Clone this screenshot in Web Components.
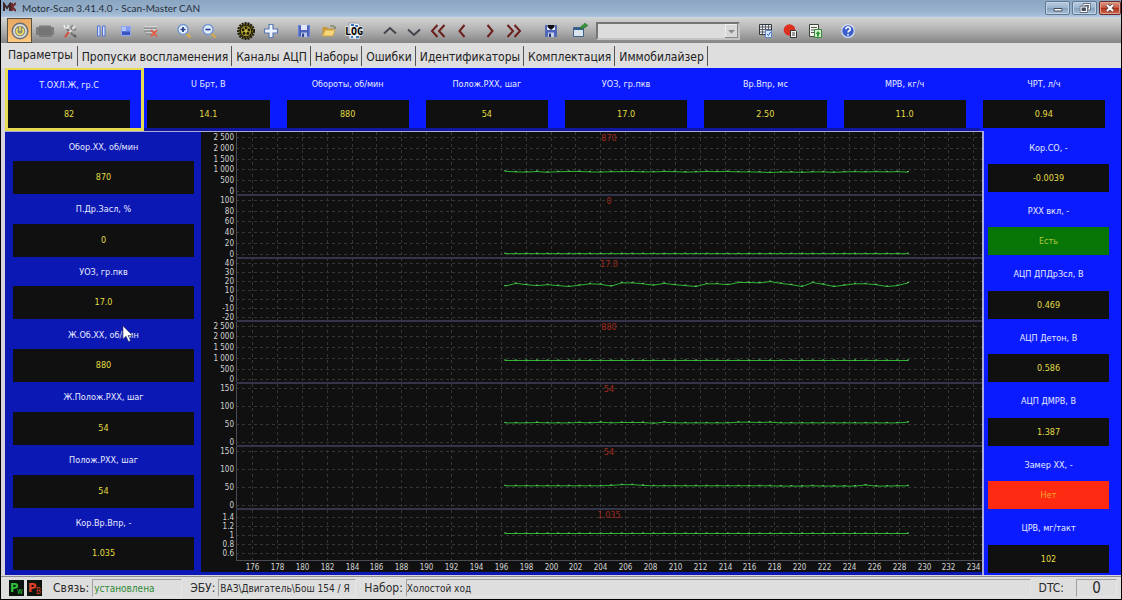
<!DOCTYPE html>
<html lang="ru">
<head>
<meta charset="utf-8">
<meta name="viewport" content="width=device-width, initial-scale=1">
<title>Motor-Scan 3.41.4.0 - Scan-Master CAN</title>
<style>
    html, body {
        height: 100%;
    }

    body {
        margin: 0;
        background: #000;
        font-family: "DejaVu Sans Condensed", "DejaVu Sans", sans-serif;
    }
</style>
</head>
<body>
<scan-app></scan-app>

<script>
const ICONS = {
    power: `<circle cx="9" cy="9" r="8.500" fill="#6c6d70"/><circle cx="9" cy="9" r="7" fill="#d9dcde"/><circle cx="9" cy="9" r="5.200" fill="#8b8c7c"/><path d="M6.600 6.600a3.400 3.400 0 1 0 4.800 0M9 4.600v4.200" fill="none" stroke="#f3e45a" stroke-width="1.500"/>`,
    engine: `<path d="M1 5h2V3.500h12V5h3v8h-2v2H3v-2H0V6z" fill="#7c7c7c"/><path d="M3 6h12v7H3z" fill="#747474"/>`,
    tools: `<path d="M4 5l9 9" stroke="#777" stroke-width="2"/><path d="M3 3l1 3 3 0 0-3" fill="none" stroke="#eee" stroke-width="1.500"/><path d="M14 4L5 14" stroke="#dedede" stroke-width="2"/><path d="M8 10l-4 5" stroke="#c8503c" stroke-width="2.200"/><path d="M12 3.500a2.500 2.500 0 1 0 3 3" fill="none" stroke="#858585" stroke-width="1.300"/><path d="M13 13l2 2" stroke="#555" stroke-width="2"/>`,
    pause: `<path d="M5.500 4h2.500v10H5.500zM10.500 4H13v10h-2.500z" fill="#d5e2ff" stroke="#5271cf"/>`,
    stop: `<path d="M4.500 4.500h9v9h-9z" fill="#5574dd" stroke="#8fa6f0"/><path d="M5 5h4v4H5z" fill="#b4c4fa"/><path d="M9 5h4v4H9z" fill="#8098ee"/><path d="M5 10h8v3H5z" fill="#3b55c0"/>`,
    clear: `<path d="M2 5h13M2 8h12M4 11h7" stroke="#eee" stroke-width="1.200"/><path d="M2 6h13M2 9h10M4 12h6" stroke="#777"/><path d="M9 8l6 6.500M15 8l-6 6.500" stroke="#e8573b" stroke-width="1.800"/>`,
    zoomIn: `<path d="M11 11l4.500 4.500" stroke="#d5ab45" stroke-width="2.400"/><circle cx="8" cy="7.500" r="5" fill="#e4eefb" stroke="#7195cf" stroke-width="1.400"/><path d="M5.500 7.500h5M8 5v5" stroke="#223f8e" stroke-width="1.700"/>`,
    zoomOut: `<path d="M11 11l4.500 4.500" stroke="#d5ab45" stroke-width="2.400"/><circle cx="8" cy="7.500" r="5" fill="#e4eefb" stroke="#7195cf" stroke-width="1.400"/><path d="M5.500 7.500h5" stroke="#223f8e" stroke-width="1.700"/>`,
    gear: `<circle cx="9" cy="9" r="8" fill="none" stroke="#221f08" stroke-width="2" stroke-dasharray="2 1"/><circle cx="9" cy="9" r="7.500" fill="#1d1a08"/><circle cx="9" cy="9" r="5.200" fill="#a3942c"/><g fill="#1d1a08"><circle cx="9" cy="5.800" r="1.300"/><circle cx="11.900" cy="7.900" r="1.300"/><circle cx="10.900" cy="11.400" r="1.300"/><circle cx="7.100" cy="11.400" r="1.300"/><circle cx="6.100" cy="7.900" r="1.300"/></g><circle cx="9" cy="9" r="1.200" fill="#cfc058"/><circle cx="9" cy="9" r="6.500" fill="none" stroke="#857922" stroke-dasharray="1.500 1.500"/>`,
    plus: `<path d="M7 2.500h4V7h4.500v4H11v4.500H7V11H2.500V7H7z" fill="#eef4ff" stroke="#5a7bb4" stroke-width="1.200"/>`,
    save: `<path d="M3.500 3.500h11v11h-11z" fill="#4c62bb" stroke="#6a80d4"/><path d="M6 3h6v5H6z" fill="#dfe6fa"/><path d="M6 10.500h6V15H6z" fill="#b9c5e8"/><path d="M7 11.500h2V15H7z" fill="#33458f"/>`,
    saveAs: `<path d="M3.500 3.500h11v11h-11z" fill="#4c62bb" stroke="#5468b0"/><path d="M5 3h8v5H5z" fill="#e6ebfa"/><path d="M5.500 3h7v2L9 8 5.500 5z" fill="#0c0c18"/><path d="M6 10.500h6V15H6z" fill="#c8d1ec"/><path d="M7 11.500h2V15H7z" fill="#20306e"/>`,
    folder: `<path d="M2.500 5h4l1.500 1.500h5V14H2.500z" fill="#c69a3c"/><path d="M5 8h10l-2 6H2.500z" fill="#f7d77a" stroke="#c89b3b" stroke-width=".8"/><path d="M10 4c2-2 4-1 5 1l1-1v3h-3l1-1c-1-1.500-2-1.500-4-1z" fill="#8b8b6b"/>`,
    log: `<path d="M4 1h9l2 2v14H4z" fill="#edf3fa" stroke="#8a94a4" stroke-width=".8"/><path d="M6 2h3v2H6zM10 3h3v2h-3zM6 14h2v2H6zM11 14h3v2h-3z" fill="#3b75b5"/><text x="9" y="13" font-family="DejaVu Sans Mono" font-weight="bold" font-size="10" text-anchor="middle" stroke="#e6e6e6" stroke-width="1.500" paint-order="stroke">LOG</text>`,
    up: `<path d="M3 11.500L9 6l6 5.500" fill="none" stroke="#42454f" stroke-width="2"/>`,
    down: `<path d="M3 7.500L9 13l6-5.500" fill="none" stroke="#42454f" stroke-width="2"/>`,
    first: `<path d="M8.500 3L3 9l5.500 6M15.500 3L10 9l5.500 6" fill="none" stroke="#6c1f1c" stroke-width="2"/>`,
    prev: `<path d="M11.500 3L6.500 9l5 6" fill="none" stroke="#6c1f1c" stroke-width="2"/>`,
    next: `<path d="M6.500 3l5 6-5 6" fill="none" stroke="#6c1f1c" stroke-width="2"/>`,
    last: `<path d="M2.500 3L8 9l-5.500 6M9.500 3L15 9l-5.500 6" fill="none" stroke="#6c1f1c" stroke-width="2"/>`,
    window: `<path d="M2.500 5.500h10v9h-10z" fill="#dbe5ee" stroke="#3f6388"/><path d="M3 6h9v2H3z" fill="#35608c"/><path d="M9.500 7c0-3 2-4.500 4-4.500V1L17 3.500 13.500 6V4.800c-1 0-1.500.700-2 2.200z" fill="#33983a" stroke="#226a2a" stroke-width=".5"/>`,
    grid: `<path d="M3.500 2.500h12v10h-12z" fill="#eee" stroke="#33383f"/><path d="M4 5h11M4 7.500h11M4 10h11M6.500 3v9M9.500 3v9M12.500 3v9" stroke="#59606a"/><path d="M9.500 8.500h6v7h-6z" fill="#d8e6ff" stroke="#5e86c8"/><path d="M11 12l1.500 1.500 2-3.500" fill="none" stroke="#2e5dc8"/>`,
    record: `<circle cx="8.500" cy="8" r="5.800" fill="#dc3020"/><path d="M9.500 8.500h5l1 1v6h-6z" fill="#f5f5f5" stroke="#333"/><path d="M11 11h3M11 13h3" stroke="#444"/>`,
    report: `<path d="M3.500 2.500h9v12h-9z" fill="#f2f4ee" stroke="#3c443c"/><path d="M5 5.500h6M5 8h5M5 10.500h3" stroke="#555"/><path d="M8.500 7.500h7v8h-7z" fill="#d6f0cf" stroke="#348a3a"/><path d="M12 9l2.500 3H13v2.500h-2V12H9.500z" fill="#2f9638"/>`,
    help: `<circle cx="9" cy="9" r="6.300" fill="#3c5ecb" stroke="#d9e1f8" stroke-width="1.200"/><path d="M6.800 7.200c0-3 4.600-2.700 4.400 0 0 1.600-2.200 1.500-2.200 3.400M9 12v1.600" fill="none" stroke="#fff" stroke-width="1.600"/>`
};

class ScanTitle extends HTMLElement {
    connectedCallback() {
        this.attachShadow({ mode: "open" }).innerHTML = `
            <style>
                :host {
                    display: flex;
                    justify-content: space-between;
                    height: 18px;
                    padding-left: 2px;
                    background: linear-gradient(#8ba6c2, #98b1cc 60%, #a9c1da 90%, #d5dde5);
                    color: #26303c;
                    font: 10px/16px Lato, "Open Sans", sans-serif;
                }

                .name {
                    display: flex;
                    gap: 6px;
                }

                .name svg {
                    width: 13px;
                    height: 10px;
                    margin-top: 2px;
                }

                h1 {
                    margin: 0;
                    font: inherit;
                }

                .buttons {
                    display: flex;
                    gap: 2px;
                    padding-top: 1px;
                }

                button {
                    width: 25px;
                    height: 14px;
                    padding: 0;
                    border: 1px solid #5f7894;
                    border-radius: 2px;
                    background: linear-gradient(#b9cde2, #9bb3cd 50%, #86a1be 51%, #a8c0d8);
                    box-shadow: inset 0 0 0 1px #c4d4e4;
                }

                .close {
                    width: 22px;
                    border-color: #6e2a22;
                    background: linear-gradient(#dd9a88, #c4533c 50%, #ad3019 51%, #d0684e);
                    box-shadow: inset 0 0 0 1px #dba497;
                }

                button svg {
                    display: block;
                    width: 12px;
                    height: 10px;
                    margin: auto;
                }
            </style>
            <div class="name">
                <svg viewBox="0 0 13 10" fill="none" stroke-width="2" aria-hidden="true">
                    <path d="M1 9V2l3 4 3-4v7" stroke="#3c2a2c"/>
                    <path d="M9 1v8M13 1L9 5l4 4" stroke="#702c2c"/>
                </svg>
                <h1><slot></slot></h1>
            </div>
            <div class="buttons">
                <button aria-label="Свернуть"><svg viewBox="0 0 12 10"><path d="M2 5.500h8v2.500H2z" fill="#fff" stroke="#44505e"/></svg></button>
                <button aria-label="Восстановить"><svg viewBox="0 0 12 10"><path d="M5 1.500h5.500v4.500H5z" fill="#8aa2bc" stroke="#44505e" stroke-width="2.400"/><path d="M5 1.500h5.500v4.500H5z" fill="none" stroke="#fff" stroke-width="1.200"/><path d="M2 4h5.500v4.500H2z" fill="#8aa2bc" stroke="#44505e" stroke-width="2.400"/><path d="M2 4h5.500v4.500H2z" fill="#44505e" stroke="#fff" stroke-width="1.200"/></svg></button>
                <button class="close" aria-label="Закрыть"><svg viewBox="0 0 12 10"><path d="M3 2l6 6M9 2L3 8" stroke="#4c3a3a" stroke-width="3.600"/><path d="M3 2l6 6M9 2L3 8" stroke="#fff" stroke-width="2.200"/></svg></button>
            </div>
        `;
    }
}
customElements.define("scan-title", ScanTitle);

class ToolButton extends HTMLElement {
    get icon() {
        return this.getAttribute("icon");
    }

    get label() {
        return this.getAttribute("label");
    }

    connectedCallback() {
        this.attachShadow({ mode: "open" }).innerHTML = `
            <style>
                :host {
                    display: block;
                    width: var(--tool-width, 25px);
                }

                button {
                    display: flex;
                    align-items: center;
                    justify-content: center;
                    width: 100%;
                    height: 25px;
                    padding: 0;
                    border: 1px solid transparent;
                    background: none;
                }

                :host([active]) button {
                    border-color: #56503f;
                    background: linear-gradient(#e9a863, #f5b86d 60%, #ffca83);
                }

                svg {
                    width: 18px;
                    height: 18px;
                    flex: none;
                }
            </style>
            <button aria-label="${this.label}" title="${this.label}">
                <svg viewBox="0 0 18 18">${ICONS[this.icon]}</svg>
            </button>
        `;
    }
}
customElements.define("tool-button", ToolButton);

class ScanToolbar extends HTMLElement {
    connectedCallback() {
        this.attachShadow({ mode: "open" }).innerHTML = `
            <style>
                :host {
                    display: flex;
                    align-items: center;
                    height: 25px;
                    padding-left: 6px;
                    background: linear-gradient(#d2d2d2, #b4b4b4 45%, #858585);
                }

                .group {
                    display: flex;
                    margin-right: 8px;
                }

                .near {
                    margin-right: 4px;
                }

                .mid {
                    margin-right: 6px;
                }

                .far {
                    margin-right: 12px;
                }

                .arrows {
                    --tool-width: 24px;
                }

                select {
                    width: 144px;
                    height: 18px;
                    margin-right: 12px;
                    padding: 0 4px;
                    appearance: none;
                    border: 2px solid;
                    border-color: #757575 #c4c4c4 #c4c4c4 #757575;
                    border-radius: 0;
                    background: #dcdcdc;
                    font: inherit;
                }

                .combo {
                    display: grid;
                }

                .combo > * {
                    grid-area: 1 / 1;
                }

                .arrow {
                    justify-self: end;
                    align-self: center;
                    width: 13px;
                    height: 14px;
                    margin-right: 14px;
                    background: #d8d8d8;
                    box-shadow: inset -1px -1px #888, inset 1px 1px #eee;
                    pointer-events: none;
                }
            </style>
            <div class="group mid">
                <tool-button icon="power" label="Связь" active></tool-button>
                <tool-button icon="engine" label="Двигатель"></tool-button>
                <tool-button icon="tools" label="Настройки"></tool-button>
            </div>
            <div class="group">
                <tool-button icon="pause" label="Пауза"></tool-button>
                <tool-button icon="stop" label="Стоп"></tool-button>
                <tool-button icon="clear" label="Очистить"></tool-button>
            </div>
            <div class="group far">
                <tool-button icon="zoomIn" label="Увеличить"></tool-button>
                <tool-button icon="zoomOut" label="Уменьшить"></tool-button>
            </div>
            <div class="group">
                <tool-button icon="gear" label="Механизмы"></tool-button>
                <tool-button icon="plus" label="Добавить"></tool-button>
            </div>
            <div class="group far">
                <tool-button icon="save" label="Сохранить"></tool-button>
                <tool-button icon="folder" label="Открыть"></tool-button>
                <tool-button icon="log" label="Журнал"></tool-button>
            </div>
            <div class="group near arrows">
                <tool-button icon="up" label="Вверх"></tool-button>
                <tool-button icon="down" label="Вниз"></tool-button>
                <tool-button icon="first" label="В начало"></tool-button>
                <tool-button icon="prev" label="Назад"></tool-button>
            </div>
            <div class="group far arrows">
                <tool-button icon="next" label="Вперёд"></tool-button>
                <tool-button icon="last" label="В конец"></tool-button>
            </div>
            <div class="group near">
                <tool-button icon="saveAs" label="Сохранить набор"></tool-button>
            </div>
            <div class="group near">
                <tool-button icon="window" label="Новое окно"></tool-button>
            </div>
            <div class="combo">
                <select aria-label="Набор"><option></option></select>
                <svg class="arrow" viewBox="0 0 13 14" aria-hidden="true"><path d="M3 6h7l-3.500 3.500z" fill="#8a8a8a"/></svg>
            </div>
            <div class="group">
                <tool-button icon="grid" label="Таблица"></tool-button>
                <tool-button icon="record" label="Запись"></tool-button>
                <tool-button icon="report" label="Отчёт"></tool-button>
            </div>
            <div class="group">
                <tool-button icon="help" label="Справка"></tool-button>
            </div>
        `;
    }
}
customElements.define("scan-toolbar", ScanToolbar);

class ScanTabs extends HTMLElement {
    get items() {
        return this.getAttribute("items").split("|");
    }

    connectedCallback() {
        this.attachShadow({ mode: "open" }).innerHTML = `
            <style>
                :host {
                    display: flex;
                    height: 25px;
                    padding-left: 3px;
                    background: #dedede;
                }

                button {
                    height: 20px;
                    margin-top: 3px;
                    padding: 2px 3px 0 4px;
                    border: 0;
                    border-right: 1px solid #555;
                    background: none;
                    color: #222;
                    font: 12px/18px "DejaVu Sans Condensed", "DejaVu Sans", sans-serif;
                    white-space: nowrap;
                }

                button[aria-selected=true] {
                    padding: 0 4px 2px;
                }
            </style>
            ${this.items.map((t, i) => `<button role="tab" aria-selected="${i === 0}">${t}</button>`).join("")}
        `;
        this.setAttribute("role", "tablist");
    }
}
customElements.define("scan-tabs", ScanTabs);

class ParamCell extends HTMLElement {
    get label() {
        return this.getAttribute("label");
    }

    get value() {
        return this.getAttribute("value");
    }

    connectedCallback() {
        this.attachShadow({ mode: "open" }).innerHTML = `
            <style>
                :host {
                    display: flex;
                    flex-direction: column;
                    box-sizing: border-box;
                    min-width: 0;
                    text-align: center;
                    font-size: 9px;
                    line-height: 12px;
                }

                label {
                    flex: none;
                    display: flex;
                    align-items: center;
                    justify-content: center;
                    height: var(--label-height);
                    color: #e6ebff;
                    white-space: nowrap;
                }

                output {
                    flex: none;
                    height: var(--box-height);
                    line-height: var(--box-height);
                    background: #101010;
                    color: #e2dc40;
                }

                :host([state=on]) output {
                    background: #077607;
                    color: #a8c83c;
                }

                :host([state=off]) output {
                    background: #ff2a12;
                    color: #f5a830;
                }
            </style>
            <label for="v">${this.label}</label>
            <output id="v">${this.value}</output>
        `;
    }
}
customElements.define("param-cell", ParamCell);

class TrendChart extends HTMLElement {
    constructor() {
        super();
        this.attachShadow({ mode: "open" });
        this.bands = [
            { now: "870", ticks: ["2 500", "2 000", "1 500", "1 000", "500", "0"], max: 2500, min: 0,
              data: [910,880,870,900,860,890,900,900,880,870,890,890,900,880,880,900,890,870,880,900,890,900,880,880,870,850,870,870,860,880,880,860,880,890,880,890,880,890,870] },
            { now: "0", ticks: ["100", "80", "60", "40", "20", "0"], max: 100, min: 0, data: Array(39).fill(0) },
            { now: "17.0", ticks: ["40", "30", "20", "10", "0", "-10", "-20"], max: 40, min: -20,
              data: [14,17,15.5,14.5,15.5,14.5,13.5,15,16.5,16,14,17.5,17.5,16.5,15,17,15.5,14.5,13.5,16.5,16.5,15.5,18,18,17.5,19,17,15.5,13.5,18,16,13.5,15,16.5,16.5,15.5,13.5,14.5,17.5] },
            { now: "880", ticks: ["2 500", "2 000", "1 500", "1 000", "500", "0"], max: 2500, min: 0, data: Array(39).fill(880) },
            { now: "54", ticks: ["150", "100", "50", "0"], max: 150, min: 0,
              data: [54,54,54,55,54,54,54,55,54,56,54,55,55,55,53,56,54,54,54,54,54,54,56,56,55,56,54,54,54,54,54,54,54,54,54,54,54,54,56] },
            { now: "54", ticks: ["150", "100", "50", "0"], max: 150, min: 0,
              data: [54,54,54,54,54,54,54,54,54,54,55,57,57,55,54,54,54,54,54,54,54,54,54,54,54,54,53,53,53,54,53,53,53,53,56,53,53,54,54] },
            { now: "1.035", ticks: ["1.4", "1.2", "1", "0.8", "0.6"], max: 1.4, min: 0.6, top: 8, bottom: 19, data: Array(39).fill(1.035) }
        ];
    }

    connectedCallback() {
        this.observer = new ResizeObserver(() => this.render());
        this.observer.observe(this);
    }

    disconnectedCallback() {
        this.observer.disconnect();
    }

    render() {
        const w = this.clientWidth;
        const h = this.clientHeight;
        const left = 35;
        const axis = h - 12;
        const bandHeight = h / this.bands.length;
        const x = t => left + (t - 174.7) / 60 * (w - left);
        let grid = "";
        let lines = "";
        let texts = "";

        for (let t = 176; t <= 234; t += 2) {
            const px = Math.round(x(t)) + .5;
            grid += `<path d="M${px} 0V${axis}"/>`;
            texts += `<text x="${px}" y="${h - 2}" text-anchor="middle">${t}</text>`;
        }

        this.bands.forEach((band, i) => {
            const top = i * bandHeight;
            const first = top + (band.top || 5);
            const last = top + bandHeight - (band.bottom || 4);
            const y = v => first + (band.max - v) / (band.max - band.min) * (last - first);

            band.ticks.forEach((tick, n) => {
                const py = Math.round(first + n / (band.ticks.length - 1) * (last - first));
                grid += `<path d="M${left} ${py + .5}H${w}"/>`;
                texts += `<text x="${left - 2}" y="${py + 3}" text-anchor="end">${tick}</text>`;
            });

            if (i > 0) {
                lines += `<path class="split" d="M${left} ${Math.round(top)}H${w}"/>`;
            }
            texts += `<text class="now" x="${left + (w - left) / 2}" y="${Math.round(top) + 9}" text-anchor="middle">${band.now}</text>`;

            const points = band.data.map((v, n) => [x(196.35 + n * 32.4 / 38).toFixed(1), y(v).toFixed(1)]);
            lines += `<polyline class="trend" points="${points.join(" ")}"/>`;
            lines += points.map(p => `<rect class="dot" x="${p[0] - 1}" y="${p[1] - 1}" width="2" height="1"/>`).join("");
        });

        this.shadowRoot.innerHTML = `
            <style>
                :host {
                    display: block;
                    min-width: 0;
                    overflow: hidden;
                    background: #101010;
                }

                svg {
                    display: block;
                }

                .grid {
                    stroke: #353535;
                    stroke-dasharray: 3 3;
                }

                .axis {
                    stroke: #4b4b55;
                    fill: none;
                }

                .split {
                    stroke: #34344a;
                    stroke-width: 2;
                }

                .trend {
                    fill: none;
                    stroke: #2fb434;
                    stroke-width: 1;
                }

                .dot {
                    fill: #62cf62;
                }

                text {
                    fill: #d4d4d4;
                    font-size: 8px;
                }

                .now {
                    fill: #a02a1c;
                    font-size: 9px;
                }
            </style>
            <svg width="${w}" height="${h}">
                <g class="grid">${grid}</g>
                <path class="axis" d="M${left + .5} 0V${axis + .5}H${w}"/>
                ${lines}
                ${texts}
            </svg>
        `;
    }
}
customElements.define("trend-chart", TrendChart);

class ScanStatus extends HTMLElement {
    connectedCallback() {
        this.attachShadow({ mode: "open" }).innerHTML = `
            <style>
                :host {
                    display: flex;
                    align-items: center;
                    height: 22px;
                    padding: 0 4px 0 8px;
                    border-top: 1px solid #8c8c8c;
                    background: #dedede;
                    color: #2a2a2a;
                    font-size: 12px;
                    line-height: 18px;
                    white-space: nowrap;
                }

                .led {
                    width: 15px;
                    height: 16px;
                    margin-right: 3px;
                    background: #0c120c;
                }

                .name {
                    margin-left: 8px;
                }

                .field {
                    box-sizing: border-box;
                    height: 18px;
                    margin-left: 3px;
                    padding: 0 1px;
                    overflow: hidden;
                    border: 1px solid;
                    border-color: #a0a0a0 #e6e6e6 #e6e6e6 #a0a0a0;
                    font-size: 10px;
                    line-height: 17px;
                }

                .link {
                    width: 90px;
                    color: #2f8a35;
                }

                .ecu {
                    width: 138px;
                }

                .set {
                    flex: 1;
                    padding: 0;
                }

                .dtc {
                    width: 41px;
                    margin-left: 12px;
                    font-size: 15px;
                    text-align: center;
                }
            </style>
            <svg class="led" viewBox="0 0 15 16" fill="#2fc13c"><text x="1" y="12" font-size="13" font-weight="bold">P</text><text x="8" y="14" font-size="8">w</text></svg>
            <svg class="led" viewBox="0 0 15 16" fill="#e0442a"><text x="1" y="12" font-size="13" font-weight="bold">P</text><text x="9" y="14" font-size="8">B</text></svg>
            <span class="name">Связь:</span><span class="field link">установлена</span>
            <span class="name">ЭБУ:</span><span class="field ecu">ВАЗ\\Двигатель\\Бош 154 / Я</span>
            <span class="name">Набор:</span><span class="field set">Холостой ход</span>
            <span class="name">DTC:</span><span class="field dtc">0</span>
        `;
    }
}
customElements.define("scan-status", ScanStatus);

class ScanApp extends HTMLElement {
    cells(list) {
        return list.map(([label, value, state]) =>
            `<param-cell label="${label}" value="${value}" ${state ? `state="${state}"` : ""}></param-cell>`).join("");
    }

    connectedCallback() {
        const top = [
            ["Т.ОХЛ.Ж, гр.С", "82"], ["U Брт, В", "14.1"], ["Обороты, об/мин", "880"], ["Полож.РХХ, шаг", "54"],
            ["УОЗ, гр.пкв", "17.0"], ["Вр.Впр, мс", "2.50"], ["МРВ, кг/ч", "11.0"], ["ЧРТ, л/ч", "0.94"]
        ];
        const left = [
            ["Обор.ХХ, об/мин", "870"], ["П.Др.Засл, %", "0"], ["УОЗ, гр.пкв", "17.0"], ["Ж.Об.ХХ, об/мин", "880"],
            ["Ж.Полож.РХХ, шаг", "54"], ["Полож.РХХ, шаг", "54"], ["Кор.Вр.Впр, -", "1.035"]
        ];
        const right = [
            ["Кор.СО, -", "-0.0039"], ["РХХ вкл, -", "Есть", "on"], ["АЦП ДПДрЗсл, В", "0.469"], ["АЦП Детон, В", "0.586"],
            ["АЦП ДМРВ, В", "1.387"], ["Замер ХХ, -", "Нет", "off"], ["ЦРВ, мг/такт", "102"]
        ];

        this.attachShadow({ mode: "open" }).innerHTML = `
            <style>
                :host {
                    display: flex;
                    flex-direction: column;
                    box-sizing: border-box;
                    min-height: 100vh;
                    padding: 0 1px 1px;
                }

                main {
                    flex: 1;
                    display: flex;
                    flex-direction: column;
                    padding: 0 0 1px 4px;
                    background: #d6d2de;
                }

                .top {
                    display: flex;
                    height: 63px;
                    padding-right: 2px;
                    background: #0a1cff;
                }

                .top param-cell {
                    --label-height: 32px;
                    --box-height: 28px;
                    flex: 1;
                    padding: 0 14px 0 3px;
                    border-bottom: 3px solid #10179e;
                }

                .top param-cell:first-child {
                    padding-right: 11px;
                    padding-left: 0;
                    border: solid #e6dc52;
                    border-width: 2px 3px 3px;
                    --label-height: 30px;
                }

                .top param-cell:last-child {
                    border-color: transparent;
                }

                .work {
                    flex: 1;
                    display: flex;
                    background: #0a1cff;
                }

                .left, .right {
                    display: flex;
                    flex-direction: column;
                }

                .left param-cell, .right param-cell {
                    flex: 1;
                }

                .center {
                    flex: 1;
                    display: flex;
                    min-width: 0;
                    border: solid #a9a9dc;
                    border-width: 1px 2px 0 0;
                    background: #0c18b4;
                }

                .left {
                    width: 196px;
                    padding-bottom: 4px;
                }

                .left param-cell {
                    --label-height: 29px;
                    --box-height: 33px;
                    padding: 0 7px 0 8px;
                }

                .right {
                    width: 137px;
                }

                .right param-cell {
                    --label-height: 33px;
                    --box-height: 28px;
                    padding: 0 12px 0 4px;
                }

                trend-chart {
                    flex: 1;
                    margin-bottom: 3px;
                }

                .pointer {
                    position: absolute;
                    left: 122px;
                    top: 325px;
                    width: 12px;
                    height: 18px;
                }
            </style>
            <scan-title>Motor-Scan 3.41.4.0 - Scan-Master CAN</scan-title>
            <scan-toolbar></scan-toolbar>
            <scan-tabs items="Параметры|Пропуски воспламенения|Каналы АЦП|Наборы|Ошибки|Идентификаторы|Комплектация|Иммобилайзер"></scan-tabs>
            <main>
                <div class="top">${this.cells(top)}</div>
                <div class="work">
                    <div class="center">
                        <div class="left">${this.cells(left)}</div>
                        <trend-chart></trend-chart>
                    </div>
                    <div class="right">${this.cells(right)}</div>
                </div>
            </main>
            <scan-status></scan-status>
            <svg class="pointer" viewBox="0 0 12 18" aria-hidden="true"><path d="M1 1v13l3-3 2.500 5.500 2-1L6 10.500h4.500z" fill="#fff" stroke="#445" stroke-width=".6"/></svg>
        `;
    }
}
customElements.define("scan-app", ScanApp);
</script>
</body>
</html>
